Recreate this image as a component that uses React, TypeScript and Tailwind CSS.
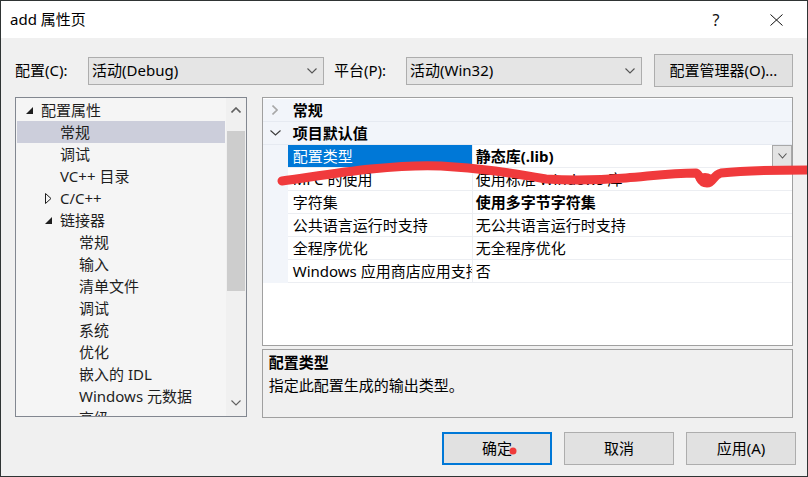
import React from "react";

const Down = ({ c = "#555", w = 10 }: { c?: string; w?: number }) => (
  <svg width={w} height={6} viewBox={`0 0 ${w} 6`}>
    <path d={`M0.5 0.5 L${w / 2} 5 L${w - 0.5} 0.5`} fill="none" stroke={c} strokeWidth="1.1" />
  </svg>
);
const Up = ({ c = "#606060", w = 10 }: { c?: string; w?: number }) => (
  <svg width={w} height={6} viewBox={`0 0 ${w} 6`}>
    <path d={`M0.5 5.5 L${w / 2} 1 L${w - 0.5} 5.5`} fill="none" stroke={c} strokeWidth="1.6" />
  </svg>
);
const Right = ({ c = "#a0a0a0" }: { c?: string }) => (
  <svg width={6} height={10} viewBox="0 0 6 10">
    <path d="M0.5 0.5 L5 5 L0.5 9.5" fill="none" stroke={c} strokeWidth="1.6" />
  </svg>
);

type TreeItem = { t: string; lvl: number; exp?: "open" | "closed"; sel?: boolean };
const tree: TreeItem[] = [
  { t: "配置属性", lvl: 0, exp: "open" },
  { t: "常规", lvl: 1, sel: true },
  { t: "调试", lvl: 1 },
  { t: "VC++ 目录", lvl: 1 },
  { t: "C/C++", lvl: 1, exp: "closed" },
  { t: "链接器", lvl: 1, exp: "open" },
  { t: "常规", lvl: 2 },
  { t: "输入", lvl: 2 },
  { t: "清单文件", lvl: 2 },
  { t: "调试", lvl: 2 },
  { t: "系统", lvl: 2 },
  { t: "优化", lvl: 2 },
  { t: "嵌入的 IDL", lvl: 2 },
  { t: "Windows 元数据", lvl: 2 },
  { t: "高级", lvl: 2 },
];
const indent = ["pl-[9px]", "pl-[28px]", "pl-[47px]"];

const props: { n: string; v: string; b?: boolean; sel?: boolean }[] = [
  { n: "配置类型", v: "静态库(.lib)", b: true, sel: true },
  { n: "MFC 的使用", v: "使用标准 Windows 库" },
  { n: "字符集", v: "使用多字节字符集", b: true },
  { n: "公共语言运行时支持", v: "无公共语言运行时支持" },
  { n: "全程序优化", v: "无全程序优化" },
  { n: "Windows 应用商店应用支持", v: "否" },
];

export default function App() {
  return (
    <div className="relative w-[808px] h-[477px] overflow-hidden border border-[#2f3434] bg-[#f0f0f0] text-[15px] text-[#000] font-[family-name:'Noto_Sans','Noto_Sans_CJK_SC',sans-serif] flex flex-col">
      {/* title bar */}
      <div className="h-[37px] bg-white flex items-center shrink-0">
        <div className="pl-[9px] leading-none">add 属性页</div>
        <div className="ml-auto w-[12px] text-center text-[16px] leading-none mr-[48px] text-[#111]">?</div>
        <div className="mr-[24px]">
          <svg width="13" height="12" viewBox="0 0 13 12">
            <path d="M0.5 0.5 L12.5 11.5 M12.5 0.5 L0.5 11.5" stroke="#111" strokeWidth="1" />
          </svg>
        </div>
      </div>

      <div className="flex-1 flex flex-col px-[14px]">
        {/* config row */}
        <div className="mt-[16px] h-[33px] flex items-center">
          <div className="w-[73px] leading-none">配置(C):</div>
          <div className="w-[236px] h-[28px] border border-[#adadad] bg-[#e5e5e5] flex items-center pl-[3px] pr-[6px]">
            <span className="leading-none">活动(Debug)</span>
            <span className="ml-auto"><Down c="#555" /></span>
          </div>
          <div className="w-[72px] ml-[10px] leading-none">平台(P):</div>
          <div className="w-[236px] h-[28px] border border-[#adadad] bg-[#e5e5e5] flex items-center pl-[3px] pr-[6px]">
            <span className="leading-none">活动(Win32)</span>
            <span className="ml-auto"><Down c="#555" /></span>
          </div>
          <div className="ml-[12px] w-[139px] h-[33px] border border-[#adadad] bg-[#e1e1e1] flex items-center justify-center leading-none">
            配置管理器(O)...
          </div>
        </div>

        {/* main */}
        <div className="mt-[10px] flex">
          {/* tree */}
          <div className="w-[232px] h-[320px] border border-[#828790] bg-[#f5f5f5] flex">
            <div className="flex-1 overflow-hidden pt-[1px] px-[1px]">
              {tree.map((it, i) => (
                <div
                  key={i}
                  className={`h-[22px] flex items-center whitespace-nowrap ${indent[it.lvl]} ${it.sel ? "bg-[#cccedb]" : ""}`}
                >
                  <span className="w-[15px] flex items-center shrink-0">
                    {it.exp === "open" && (
                      <svg width="7" height="7" viewBox="0 0 7 7">
                        <polygon points="7,0 7,7 0,7" fill="#1e1e1e" />
                      </svg>
                    )}
                    {it.exp === "closed" && (
                      <svg width="7" height="11" viewBox="0 0 7 11">
                        <polygon points="0.5,0.5 6,5.5 0.5,10.5" fill="none" stroke="#1e1e1e" strokeWidth="1" />
                      </svg>
                    )}
                  </span>
                  <span className="leading-none text-[#1e1e1e]">{it.t}</span>
                </div>
              ))}
            </div>
            <div className="w-[20px] bg-[#f0f0f0] flex flex-col items-center px-[1px]">
              <div className="h-[24px] flex items-center justify-center"><Up /></div>
              <div className="h-[9px]" />
              <div className="w-full h-[160px] bg-[#cdcdcd]" />
              <div className="flex-1" />
              <div className="h-[24px] flex items-center justify-center mb-[1px]"><Down c="#606060" w={10} /></div>
            </div>
          </div>

          {/* right column */}
          <div className="ml-[15px] w-[532px] flex flex-col">
            <div className="h-[249px] border border-[#a0a0a0] bg-white pt-[1px] overflow-hidden">
              <div className="h-[23px] flex items-center bg-[#f2f5fa] border-b border-[#e6eaf1]">
                <div className="w-[25px] flex justify-center"><Right c="#a8a8a8" /></div>
                <div className="pl-[5px] font-bold leading-none">常规</div>
              </div>
              <div className="h-[23px] flex items-center bg-[#f2f5fa] border-b border-[#e6eaf1]">
                <div className="w-[25px] flex justify-center"><Down c="#3c3c3c" w={11} /></div>
                <div className="pl-[5px] font-bold leading-none">项目默认值</div>
              </div>
              {props.map((p, i) => (
                <div key={i} className="h-[23px] flex">
                  <div className="w-[25px] shrink-0 bg-[#f2f5fa]" />
                  <div
                    className={`w-[185px] shrink-0 border-b border-r border-[#eceef2] overflow-hidden whitespace-nowrap flex items-center pl-[5px] ${
                      p.sel ? "bg-[#0078d7] text-white" : ""
                    }`}
                  >
                    <span className="leading-none">{p.n}</span>
                  </div>
                  <div className="flex-1 border-b border-[#eceef2] flex items-center pl-[3px] whitespace-nowrap">
                    <span className={`leading-none ${p.b ? "font-bold" : ""}`}>{p.v}</span>
                    {p.sel && (
                      <div className="ml-auto self-start w-[20px] h-[22px] border border-[#a8a8a8] bg-[#e3e3e3] flex items-center justify-center">
                        <Down c="#555" w={9} />
                      </div>
                    )}
                  </div>
                </div>
              ))}
            </div>
            <div className="mt-[3px] h-[69px] border border-[#a0a0a0] bg-[#f0f0f0] px-[6px] pt-[1px]">
              <div className="h-[23px] flex items-center font-bold leading-none">配置类型</div>
              <div className="h-[23px] flex items-center leading-none">指定此配置生成的输出类型。</div>
            </div>
          </div>
        </div>

        {/* buttons */}
        <div className="mt-[14px] flex justify-end gap-[12px] mr-[-3px]">
          <div className="w-[110px] h-[33px] border-2 border-[#0078d7] bg-[#e1e1e1] flex items-center justify-center leading-none">确定</div>
          <div className="w-[110px] h-[33px] border border-[#adadad] bg-[#e1e1e1] flex items-center justify-center leading-none">取消</div>
          <div className="w-[110px] h-[33px] border border-[#adadad] bg-[#e1e1e1] flex items-center justify-center leading-none">应用(A)</div>
        </div>
      </div>

      {/* red annotation overlay */}
      <svg className="absolute left-0 top-0 pointer-events-none" width="808" height="477" viewBox="0 0 808 477">
        <path
          d="M281 180 C 310 176 340 171 370 168 C 400 165 420 164 440 165 C 480 167 510 172 545 178 C 575 180 600 179 625 177 C 650 175 670 172 695 172 C 700 174 698 182 706 182 C 712 182 712 174 720 172 C 740 170 765 169 808 169"
          fill="none"
          stroke="#f03a3c"
          strokeWidth="9"
          strokeLinecap="round"
          strokeLinejoin="round"
        />
        <ellipse cx="704" cy="178" rx="9" ry="6" fill="#f03a3c" />
        <circle cx="512" cy="450" r="3.5" fill="#ef3b3b" />
      </svg>
    </div>
  );
}
